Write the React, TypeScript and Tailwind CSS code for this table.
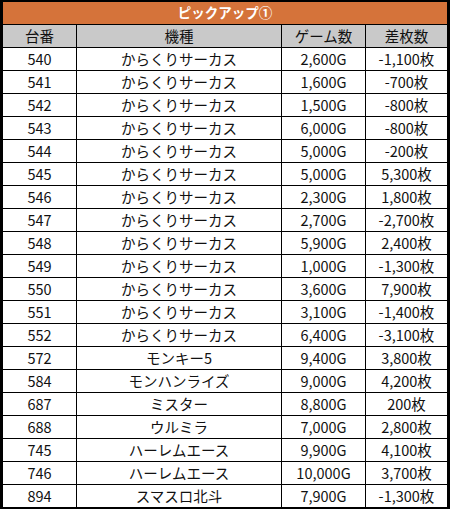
import React from "react";

const rows: [string, string, string, string][] = [
  ["540", "からくりサーカス", "2,600G", "-1,100枚"],
  ["541", "からくりサーカス", "1,600G", "-700枚"],
  ["542", "からくりサーカス", "1,500G", "-800枚"],
  ["543", "からくりサーカス", "6,000G", "-800枚"],
  ["544", "からくりサーカス", "5,000G", "-200枚"],
  ["545", "からくりサーカス", "5,000G", "5,300枚"],
  ["546", "からくりサーカス", "2,300G", "1,800枚"],
  ["547", "からくりサーカス", "2,700G", "-2,700枚"],
  ["548", "からくりサーカス", "5,900G", "2,400枚"],
  ["549", "からくりサーカス", "1,000G", "-1,300枚"],
  ["550", "からくりサーカス", "3,600G", "7,900枚"],
  ["551", "からくりサーカス", "3,100G", "-1,400枚"],
  ["552", "からくりサーカス", "6,400G", "-3,100枚"],
  ["572", "モンキー5", "9,400G", "3,800枚"],
  ["584", "モンハンライズ", "9,000G", "4,200枚"],
  ["687", "ミスター", "8,800G", "200枚"],
  ["688", "ウルミラ", "7,000G", "2,800枚"],
  ["745", "ハーレムエース", "9,900G", "4,100枚"],
  ["746", "ハーレムエース", "10,000G", "3,700枚"],
  ["894", "スマスロ北斗", "7,900G", "-1,300枚"],
];

const grid = "grid grid-cols-[74px_205px_84px_81px]";

export default function App() {
  return (
    <div
      className="w-[450px] h-[509px] bg-white border-black border-t-[2px] border-b-[2px] border-l-[3px] border-r-[3px] text-[#111]"
      style={{ fontFamily: '"Noto Sans CJK JP", "Noto Sans", sans-serif' }}
    >
      <div className="h-[23px] bg-[#D5733A] border-b border-black flex items-center justify-center text-white font-bold text-[13.5px] leading-none">
        ピックアップ①
      </div>
      <div className={`${grid} h-[23px] bg-[#C9C9C9] border-b border-black text-[14.5px] leading-none`}>
        {["台番", "機種", "ゲーム数", "差枚数"].map((h, i) => (
          <div
            key={h}
            className={`flex items-center justify-center ${i < 3 ? "border-r border-black" : ""}`}
          >
            {h}
          </div>
        ))}
      </div>
      {rows.map((r, ri) => (
        <div
          key={ri}
          className={`${grid} ${ri < rows.length - 1 ? "h-[23px] border-b border-black" : "h-[22px]"} text-[14.5px] leading-none`}
        >
          {r.map((c, i) => (
            <div
              key={i}
              className={`flex items-center justify-center ${i < 3 ? "border-r border-black" : ""}`}
            >
              {c}
            </div>
          ))}
        </div>
      ))}
    </div>
  );
}
